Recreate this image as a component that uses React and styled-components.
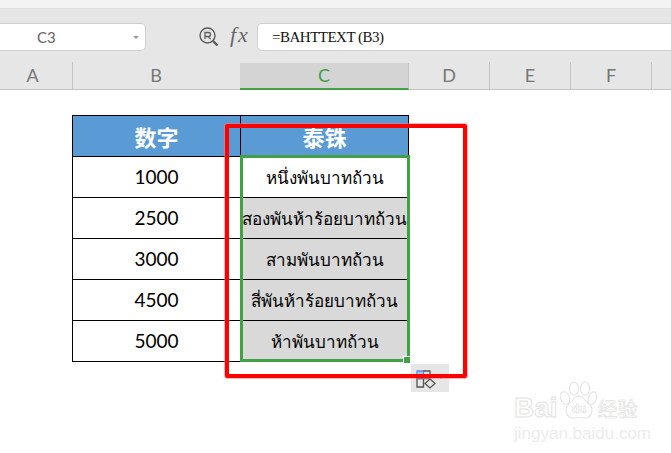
import React from "react";
import styled, { createGlobalStyle } from "styled-components";

const GlobalStyle = createGlobalStyle`
  html, body {
    margin: 0;
    padding: 0;
    background: #fff;
  }
  body {
    font-family: "Liberation Sans", "Noto Sans CJK SC", sans-serif;
  }
`;

const columns = [
  { name: "A", width: 73, inset: 7 },
  { name: "B", width: 167, inset: 0, plain: true },
  { name: "C", width: 169, inset: 0, active: true },
  { name: "D", width: 81, inset: 0 },
  { name: "E", width: 81, inset: 0 },
  { name: "F", width: 81, inset: 0 },
  { name: "", width: 19, inset: 0, plain: true },
];

const rows = [
  { num: "1000", thai: "หนึ่งพันบาทถ้วน" },
  { num: "2500", thai: "สองพันห้าร้อยบาทถ้วน", shaded: true },
  { num: "3000", thai: "สามพันบาทถ้วน", shaded: true },
  { num: "4500", thai: "สี่พันห้าร้อยบาทถ้วน", shaded: true },
  { num: "5000", thai: "ห้าพันบาทถ้วน", shaded: true },
];

const App = () => {
  return (
    <Page>
      <GlobalStyle />
      <TopStrip />
      <FormulaBar>
        <NameBox>
          <span>C3</span>
          <Caret />
        </NameBox>
        <BarIcons>
          <svg width="22" height="22" viewBox="0 0 22 22" fill="none" stroke="#5c5c5c">
            <circle cx="9.5" cy="9.5" r="7.5" strokeWidth="1.4" />
            <path d="M7 13V6.5h3.5a2 2 0 0 1 0 4H7M10 10.5l2.6 2.6" strokeWidth="1.3" />
            <path d="M15 15l4.5 4.5" strokeWidth="2.4" />
          </svg>
          <FxLabel>fx</FxLabel>
        </BarIcons>
        <FormulaInput>=BAHTTEXT (B3)</FormulaInput>
      </FormulaBar>
      <ColumnHeaders>
        {columns.map((col) => (
          <ColumnHead
            key={col.name}
            $width={col.width}
            $inset={col.inset}
            $active={col.active}
            $plain={col.plain}
          >
            {col.name}
          </ColumnHead>
        ))}
      </ColumnHeaders>
      <Sheet>
        <Table>
          <HeadCell>数字</HeadCell>
          <HeadCell>泰铢</HeadCell>
          {rows.map((row) => (
            <React.Fragment key={row.num}>
              <NumCell>{row.num}</NumCell>
              <ThaiCell $shaded={row.shaded}>{row.thai}</ThaiCell>
            </React.Fragment>
          ))}
        </Table>

        <Selection>
          <FillHandle />
        </Selection>
        <PasteTag>
          <svg width="20" height="19" viewBox="0 0 20 19" fill="none" stroke="#555" strokeWidth="1.3">
            <path d="M1 8.5V1h6.5v7.5z" fill="#a9c7ee" stroke="#5b8fd6" />
            <path d="M7.5 1H14v7.5H1V17h6.5V8.5" />
            <path d="M14 9l5 4.5-5 4.5-5-4.5z" />
          </svg>
          <TinyCaret />
        </PasteTag>
        <RedFrame />

        <Watermark>
          <PawRow>
            <BaiText>Bai</BaiText>
            <PawIcon width="37" height="39" viewBox="0 0 37 39" fill="none" stroke="#e4e4e4" strokeWidth="1.1">
              <ellipse cx="5" cy="17" rx="4.5" ry="6.5" transform="rotate(-20 5 17)" />
              <ellipse cx="14" cy="7.5" rx="4.5" ry="6.5" />
              <ellipse cx="25" cy="7.5" rx="4.5" ry="6.5" />
              <ellipse cx="32.5" cy="17" rx="4" ry="6.5" transform="rotate(20 32 17)" />
              <path d="M19 15c5 0 6 5 10 8 6 5 2 15-5 14-3-.6-7-.6-10 0-7 1-11-9-5-14 4-3 5-8 10-8z" />
              <text x="19" y="32" textAnchor="middle" fontSize="12" fontWeight="700" fontFamily="Liberation Sans" fill="#fff" stroke="#e2e2e2" strokeWidth="0.6">du</text>
            </PawIcon>
            <JingyanText>经验</JingyanText>
          </PawRow>
          <WatermarkUrl>jingyan.baidu.com</WatermarkUrl>
        </Watermark>
      </Sheet>
    </Page>
  );
};

export default App;

// Styled-components

const Page = styled.div`
  width: 671px;
  height: 453px;
  overflow: hidden;
  background: #fff;
`;

const TopStrip = styled.div`
  height: 8px;
  background: #f3f3f3;
  border-bottom: 1px solid #e0e0e0;
`;

const FormulaBar = styled.div`
  height: 53px;
  box-sizing: border-box;
  padding-top: 14px;
  display: flex;
  align-items: flex-start;
  background: #e6e6e6;
`;

const NameBox = styled.div`
  width: 146px;
  height: 28px;
  box-sizing: border-box;
  padding: 0 6px 0 37px;
  display: flex;
  align-items: center;
  justify-content: space-between;
  background: #fff;
  border: 1px solid #cfcfcf;
  border-left: none;
  border-radius: 0 5px 5px 0;
  font-family: Lato, "Liberation Sans", sans-serif;
  font-size: 15px;
  color: #666;
`;

const Caret = styled.i`
  width: 0;
  height: 0;
  border-left: 3px solid transparent;
  border-right: 3px solid transparent;
  border-top: 3px solid #999;
`;

const BarIcons = styled.div`
  width: 111px;
  height: 28px;
  box-sizing: border-box;
  padding-left: 52px;
  display: flex;
  align-items: center;
  gap: 10px;
`;

const FxLabel = styled.span`
  font-family: "Liberation Serif", serif;
  font-style: italic;
  font-size: 22px;
  letter-spacing: 2px;
  color: #666;
  line-height: 1;
  position: relative;
  top: -2px;
`;

const FormulaInput = styled.div`
  flex: 1;
  height: 28px;
  box-sizing: border-box;
  padding-left: 14px;
  display: flex;
  align-items: center;
  background: #fff;
  border: 1px solid #cfcfcf;
  border-right: none;
  border-radius: 5px 0 0 5px;
  font-family: "Liberation Serif", serif;
  font-size: 15px;
  color: #111;
  letter-spacing: -0.5px;
`;

const ColumnHeaders = styled.div`
  height: 28px;
  box-sizing: border-box;
  display: flex;
  align-items: flex-end;
  background: #e6e6e6;
  border-bottom: 1px solid #c4c4c4;
`;

const ColumnHead = styled.div`
  width: ${(p) => p.$width}px;
  flex-shrink: 0;
  height: 27px;
  box-sizing: border-box;
  padding: 0 ${(p) => p.$inset}px 2px 0;
  margin-bottom: ${(p) => (p.$active ? "-1px" : "0")};
  display: flex;
  align-items: center;
  justify-content: center;
  font-family: Lato, "Liberation Sans", sans-serif;
  font-size: 18px;
  color: ${(p) => (p.$active ? "#3f9f45" : "#777")};
  background: ${(p) => (p.$active ? "#d4d4d4" : "transparent")};
  border-right: 1px solid ${(p) => (p.$plain ? "transparent" : "#c4c4c4")};
  border-bottom: ${(p) => (p.$active ? "2px solid #43a047" : "none")};
`;

const Sheet = styled.div`
  position: relative;
  height: 363px;
  box-sizing: border-box;
  padding: 25px 0 0 72px;
  background: #fff;
`;

const Table = styled.div`
  width: 337px;
  display: grid;
  grid-template-columns: 168px 168px;
  grid-auto-rows: 41px;
  box-sizing: border-box;
  border-top: 1px solid #000;
  border-left: 1px solid #000;
`;

const Cell = styled.div`
  display: flex;
  align-items: center;
  justify-content: center;
  box-sizing: border-box;
  border-right: 1px solid #000;
  border-bottom: 1px solid #000;
  white-space: nowrap;
  overflow: hidden;
`;

const HeadCell = styled(Cell)`
  background: #5b9bd5;
  color: #fff;
  font-family: "Noto Sans CJK SC", sans-serif;
  font-weight: 700;
  font-size: 22px;
`;

const NumCell = styled(Cell)`
  padding-bottom: 2px;
  font-family: Lato, "Liberation Sans", sans-serif;
  font-size: 19px;
  color: #000;
`;

const ThaiCell = styled(Cell)`
  font-family: "Noto Sans", "Liberation Sans", sans-serif;
  font-size: 17px;
  color: #000;
  background: ${(p) => (p.$shaded ? "#d9d9d9" : "#fff")};
`;

const Selection = styled.div`
  position: absolute;
  left: 240px;
  top: 65px;
  width: 170px;
  height: 207px;
  box-sizing: border-box;
  border: 3px solid #43a047;
`;

const FillHandle = styled.div`
  position: absolute;
  right: -4px;
  bottom: -5px;
  width: 6px;
  height: 6px;
  background: #43a047;
  border: 1px solid #fff;
`;

const PasteTag = styled.div`
  position: absolute;
  left: 411px;
  top: 274px;
  width: 38px;
  height: 28px;
  box-sizing: border-box;
  padding: 6px 0 0 5px;
  display: flex;
  gap: 3px;
  background: #e6e6e6;
`;

const TinyCaret = styled.i`
  margin-top: 7px;
  width: 0;
  height: 0;
  border-left: 2px solid transparent;
  border-right: 2px solid transparent;
  border-top: 2px solid #999;
`;

const RedFrame = styled.div`
  position: absolute;
  left: 225px;
  top: 34px;
  width: 242px;
  height: 254px;
  box-sizing: border-box;
  border: 4px solid #f00;
  border-radius: 2px;
  box-shadow: 0 0 0 1px rgba(255, 120, 120, 0.5);
`;

const Watermark = styled.div`
  position: absolute;
  left: 514px;
  top: 291px;
  width: 130px;
  display: flex;
  flex-direction: column;
  align-items: flex-start;
`;

const PawRow = styled.div`
  display: flex;
  align-items: flex-end;
  height: 43px;
`;

const PawIcon = styled.svg`
  flex-shrink: 0;
  margin: 0 0 4px 2px;
`;

const BaiText = styled.span`
  font-family: "Liberation Sans", sans-serif;
  font-size: 28px;
  font-weight: 700;
  line-height: 32px;
  color: transparent;
  -webkit-text-stroke: 1px #e2e2e2;
`;

const JingyanText = styled.span`
  margin-left: 1px;
  font-family: "Noto Sans CJK SC", sans-serif;
  font-size: 20px;
  line-height: 30px;
  color: transparent;
  -webkit-text-stroke: 0.7px #e2e2e2;
`;

const WatermarkUrl = styled.span`
  font-family: "Liberation Sans", sans-serif;
  font-size: 17px;
  line-height: 20px;
  color: #ececec;
`;
